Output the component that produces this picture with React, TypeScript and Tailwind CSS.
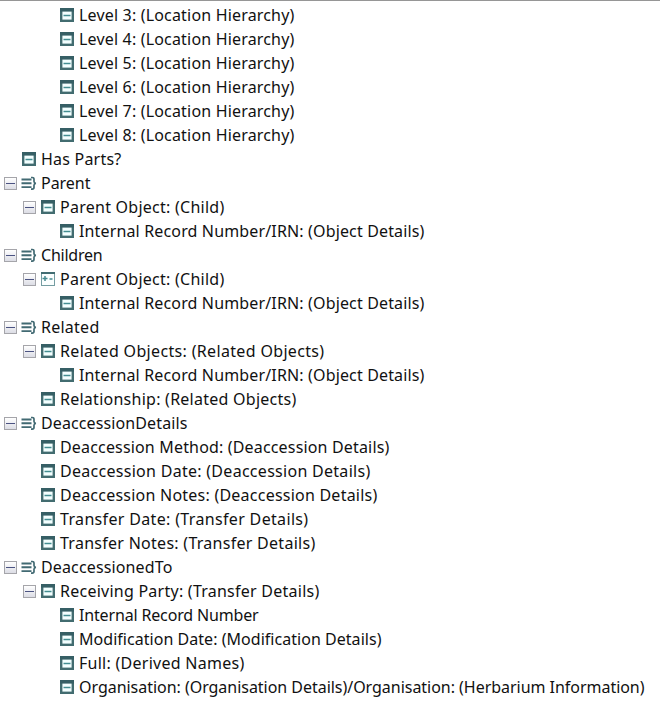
import { useLayoutEffect, useRef } from 'react';

type Kind = 'field' | 'group' | 'link';
type Node = { level: 0 | 1 | 2; kind: Kind; text: string; width: number; open?: boolean };

const rows: Node[] = [
  ...[3, 4, 5, 6, 7, 8].map((n): Node => ({ level: 2, kind: 'field', text: `Level ${n}: (Location Hierarchy)`, width: 214 })),
  { level: 0, kind: 'field', text: 'Has Parts?', width: 79 },
  { level: 0, kind: 'group', text: 'Parent', width: 48, open: true },
  { level: 1, kind: 'field', text: 'Parent Object: (Child)', width: 163, open: true },
  { level: 2, kind: 'field', text: 'Internal Record Number/IRN: (Object Details)', width: 344 },
  { level: 0, kind: 'group', text: 'Children', width: 60, open: true },
  { level: 1, kind: 'link', text: 'Parent Object: (Child)', width: 163, open: true },
  { level: 2, kind: 'field', text: 'Internal Record Number/IRN: (Object Details)', width: 344 },
  { level: 0, kind: 'group', text: 'Related', width: 57, open: true },
  { level: 1, kind: 'field', text: 'Related Objects: (Related Objects)', width: 263, open: true },
  { level: 2, kind: 'field', text: 'Internal Record Number/IRN: (Object Details)', width: 344 },
  { level: 1, kind: 'field', text: 'Relationship: (Related Objects)', width: 235 },
  { level: 0, kind: 'group', text: 'DeaccessionDetails', width: 145, open: true },
  { level: 1, kind: 'field', text: 'Deaccession Method: (Deaccession Details)', width: 328 },
  { level: 1, kind: 'field', text: 'Deaccession Date: (Deaccession Details)', width: 309 },
  { level: 1, kind: 'field', text: 'Deaccession Notes: (Deaccession Details)', width: 316 },
  { level: 1, kind: 'field', text: 'Transfer Date: (Transfer Details)', width: 247 },
  { level: 1, kind: 'field', text: 'Transfer Notes: (Transfer Details)', width: 254 },
  { level: 0, kind: 'group', text: 'DeaccessionedTo', width: 130, open: true },
  { level: 1, kind: 'field', text: 'Receiving Party: (Transfer Details)', width: 258, open: true },
  { level: 2, kind: 'field', text: 'Internal Record Number', width: 178 },
  { level: 2, kind: 'field', text: 'Modification Date: (Modification Details)', width: 301 },
  { level: 2, kind: 'field', text: 'Full: (Derived Names)', width: 164 },
  { level: 2, kind: 'field', text: 'Organisation: (Organisation Details)/Organisation: (Herbarium Information)', width: 564 },
];

const indents = ['pl-[4px]', 'pl-[23px]', 'pl-[42px]'];

function Toggle() {
  return (
    <span className="flex h-[13px] w-[13px] items-center justify-center border border-[#a5a5aa] bg-gradient-to-b from-white to-[#dcdde5]">
      <span className="h-px w-[9px] bg-[#4b5382]" />
    </span>
  );
}

function Icon({ kind }: { kind: Kind }) {
  if (kind === 'group')
    return (
      <svg className="block" width="16" height="16" viewBox="0 0 16 16" fill="none">
        <path d="M.5 4.5h10M.5 8.3h10M.5 12.1h10" stroke="#426a73" strokeWidth="1.9" />
        <path d="M10 2.5h1.2q1.8 0 1.8 1.6v2.3q0 1.6 1.9 1.9-1.9.3-1.9 1.9v2.3q0 1.6-1.8 1.6H10" stroke="#426a73" strokeWidth="1.7" />
      </svg>
    );
  if (kind === 'link')
    return (
      <svg className="block" width="16" height="16" viewBox="0 0 16 16" fill="none">
        <rect x="1.5" y="1.5" width="13" height="13" fill="#fbffff" stroke="#759da2" />
        <path d="M1 2h14" stroke="#426d73" strokeWidth="2" />
        <path d="M2.5 7.5h5M5 5v5M9.5 8h3" stroke="#468b91" strokeWidth="1.5" />
      </svg>
    );
  return (
    <svg className="block" width="16" height="16" viewBox="0 0 16 16" fill="none">
      <rect x="2.2" y="2.2" width="11.6" height="11.6" fill="#f3ffff" stroke="#426c70" strokeWidth="2.4" />
      <path d="M1 2.8h14" stroke="#365f65" strokeWidth="3.6" />
      <path d="M4.5 8.5h7" stroke="#438d91" strokeWidth="1.5" />
    </svg>
  );
}

function Label({ text, width }: { text: string; width: number }) {
  const ref = useRef<HTMLSpanElement>(null);
  useLayoutEffect(() => {
    const label = ref.current;
    if (!label) return;
    label.style.letterSpacing = '0px';
    const natural = label.getBoundingClientRect().width;
    label.style.letterSpacing = `${(width + 1.5 - natural) / text.length}px`;
  }, [text, width]);
  return <span ref={ref} className="ml-[4px] shrink-0 whitespace-nowrap">{text}</span>;
}

export default function App() {
  return (
    <main className="h-[701px] w-[660px] overflow-hidden border-t border-[#969696] bg-white pt-[2px] font-['Noto_Sans',sans-serif] text-[16px] leading-[24px] text-[#111]">
      {rows.map((row, i) => (
        <div key={i} className={`flex h-[24px] items-center ${indents[row.level]}`}>
          <span className="w-[17px] shrink-0">{row.open && <Toggle />}</span>
          <span className="w-[16px] shrink-0"><Icon kind={row.kind} /></span>
          <Label text={row.text} width={row.width} />
        </div>
      ))}
    </main>
  );
}
